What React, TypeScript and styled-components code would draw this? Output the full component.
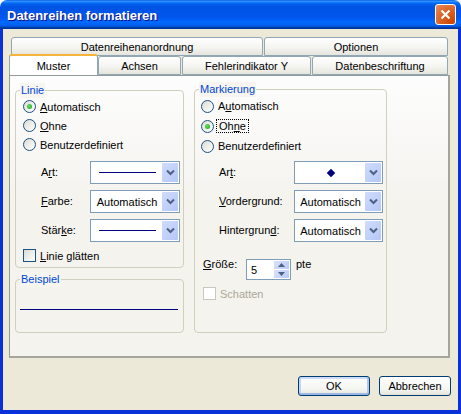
import React from "react";
import styled, { createGlobalStyle } from "styled-components";

const GlobalStyle = createGlobalStyle`
  html, body {
    margin: 0;
    padding: 0;
    background: #fff;
  }
  body {
    font-family: "Liberation Sans", "DejaVu Sans", sans-serif;
    font-size: 11px;
    color: #000;
  }
`;

const Win = styled.div`
  width: 461px;
  height: 414px;
  display: flex;
  flex-direction: column;
  overflow: hidden;
  border-radius: 7px 7px 0 0;
`;

const TitleBar = styled.div`
  height: 29px;
  flex: none;
  display: flex;
  align-items: center;
  justify-content: space-between;
  padding: 0 5px 0 7px;
  background: linear-gradient(
    180deg,
    #0058ee 0%,
    #3593ff 4%,
    #288eff 6%,
    #127dff 8%,
    #036ffc 10%,
    #0262ee 14%,
    #0057e5 20%,
    #0054e3 24%,
    #0055eb 56%,
    #005bf5 66%,
    #026afe 76%,
    #0062ef 86%,
    #0052d6 92%,
    #0040ab 94%,
    #003092 100%
  );
`;

const TitleText = styled.div`
  font-family: "Liberation Sans", sans-serif;
  font-weight: bold;
  font-size: 13px;
  padding-top: 2px;
  color: #fff;
  text-shadow: 1px 1px 0 #0f1089;
`;

const CloseButton = styled.div`
  width: 19px;
  height: 19px;
  border: 1px solid #fff;
  border-radius: 3px;
  display: flex;
  align-items: center;
  justify-content: center;
  background: radial-gradient(circle at 85% 90%, #cc4600 0%, #dc6527 55%, #e78c5f 100%);
`;

const Client = styled.div`
  flex: 1;
  min-height: 0;
  background: #ece9d8;
  border-left: 3px solid #0831d9;
  border-right: 3px solid #0831d9;
  border-bottom: 4px solid #0831d9;
  padding: 8px 7px 0 6px;
`;

const TabRowTop = styled.div`
  display: flex;
  gap: 1px;
  height: 19px;
  margin-left: 2px;
`;

const TabRowBottom = styled.div`
  display: flex;
  align-items: flex-end;
  height: 21px;
  margin-top: -2px;
  position: relative;
`;

const Tab = styled.div<{ $w: number; $gap?: number; $active?: boolean }>`
  width: ${(p) => p.$w}px;
  height: ${(p) => (p.$active ? 21 : 19)}px;
  margin-right: ${(p) => p.$gap ?? 0}px;
  box-sizing: border-box;
  display: flex;
  align-items: center;
  justify-content: center;
  padding-top: ${(p) => (p.$active ? 0 : 1)}px;
  border: 1px solid #91a7b4;
  border-bottom: ${(p) => (p.$active ? "none" : "1px solid #91a7b4")};
  border-top: ${(p) => (p.$active ? "2px solid #f5b53c" : "1px solid #91a7b4")};
  border-radius: 3px 3px 0 0;
  background: ${(p) => (p.$active ? "#fff" : "linear-gradient(180deg, #fff 0%, #f3f3ef 60%, #e6e5dc 100%)")};
  position: relative;
  z-index: ${(p) => (p.$active ? 2 : 1)};
`;

const Panel = styled.div`
  width: 441px;
  height: 283px;
  box-sizing: border-box;
  display: flex;
  align-items: flex-start;
  gap: 10px;
  padding: 14px 5px 0 5px;
  border: 1px solid #919b9c;
  border-right: 2px solid #a5a59c;
  border-bottom: 2px solid #a5a59c;
  background: linear-gradient(180deg, #fdfdfd 0%, #f4f3ee 45%, #f4f3ee 100%);
`;

const Column = styled.div`
  display: flex;
  flex-direction: column;
  gap: 11px;
`;

const Group = styled.div<{ $w: number; $h: number; $up?: boolean }>`
  position: relative;
  width: ${(p) => p.$w}px;
  height: ${(p) => p.$h}px;
  box-sizing: border-box;
  margin-top: ${(p) => (p.$up ? -1 : 0)}px;
  padding: 6px 3px 0 ${(p) => (p.$up ? 6 : 7)}px;
  border: 1px solid #d0d0bf;
  border-radius: 4px;
`;

const Legend = styled.div`
  position: absolute;
  top: -8px;
  left: 4px;
  padding: 0 1px;
  background: #f6f5f0;
  color: #0046d5;
  line-height: 15px;
`;

const OptionRow = styled.div<{ $h?: number }>`
  height: ${(p) => p.$h ?? 19}px;
  display: flex;
  align-items: center;
  gap: 4px;
`;

const SmoothRow = styled(OptionRow)`
  margin-top: 4px;
`;

const Radio = styled.span<{ $on?: boolean }>`
  width: 13px;
  height: 13px;
  box-sizing: border-box;
  flex: none;
  border: 1px solid #1c5180;
  border-radius: 50%;
  background: linear-gradient(135deg, #dcdcd5 0%, #fff 100%);
  display: flex;
  align-items: center;
  justify-content: center;
  &::after {
    content: "";
    display: ${(p) => (p.$on ? "block" : "none")};
    width: 5px;
    height: 5px;
    border-radius: 50%;
    background: radial-gradient(circle at 40% 40%, #5fe05f, #1fa01f);
  }
`;

const CheckBox = styled.span<{ $off?: boolean }>`
  width: 13px;
  height: 13px;
  box-sizing: border-box;
  flex: none;
  border: 1px solid ${(p) => (p.$off ? "#cac8bb" : "#1c5180")};
  background: ${(p) => (p.$off ? "#fff" : "linear-gradient(135deg, #dcdcd5 0%, #fff 100%)")};
`;

const Focused = styled.span`
  outline: 1px dotted #000;
  padding: 0 2px;
  margin-left: -1px;
`;

const Key = styled.span`
  text-decoration: underline;
`;

const SelectStack = styled.div<{ $top: number }>`
  display: flex;
  flex-direction: column;
  gap: 6px;
  margin-top: ${(p) => p.$top}px;
`;

const FieldRow = styled.div`
  display: flex;
  align-items: center;
  justify-content: space-between;
  padding-left: 2px;
  height: 23px;
`;

const FieldLabel = styled.div`
  padding-left: 16px;
  margin-top: -2px;
`;

const Select = styled.div<{ $w: number }>`
  width: ${(p) => p.$w}px;
  height: 23px;
  box-sizing: border-box;
  display: flex;
  align-items: center;
  justify-content: space-between;
  padding: 1px;
  border: 1px solid #7f9db9;
  background: #fff;
`;

const SelectValue = styled.div`
  flex: 1;
  display: flex;
  align-items: center;
  justify-content: center;
  height: 100%;
`;

const LineSample = styled.div`
  width: 57px;
  height: 1px;
  background: #000080;
`;

const Diamond = styled.div`
  width: 6px;
  height: 6px;
  background: #000080;
  transform: rotate(45deg);
`;

const ArrowButton = styled.div`
  width: 16px;
  height: 19px;
  flex: none;
  display: flex;
  align-items: center;
  justify-content: center;
  border-radius: 1px;
  background: linear-gradient(135deg, #d0dcfc 0%, #b4c7f7 100%);
`;

const SizeRow = styled.div`
  display: flex;
  align-items: flex-start;
  margin-top: 17px;
  margin-left: 2px;
`;

const SizeLabel = styled.div`
  width: 43px;
  line-height: 11px;
`;

const Spinner = styled.div`
  width: 45px;
  height: 21px;
  box-sizing: border-box;
  display: flex;
  justify-content: space-between;
  padding: 1px;
  border: 1px solid #7f9db9;
  background: #fff;
`;

const SpinnerValue = styled.div`
  padding: 3px 0 0 3px;
`;

const SpinnerButtons = styled.div`
  width: 15px;
  display: flex;
  flex-direction: column;
  gap: 1px;
`;

const SpinnerButton = styled.div`
  flex: 1;
  display: flex;
  align-items: center;
  justify-content: center;
  background: linear-gradient(135deg, #d8e2fc 0%, #b8caf7 100%);
`;

const Unit = styled.div`
  margin-left: 5px;
  line-height: 11px;
`;

const DisabledRow = styled.div`
  display: flex;
  align-items: center;
  gap: 4px;
  margin: 7px 0 0 2px;
  height: 13px;
  color: #aca899;
`;

const SampleBody = styled.div`
  height: 100%;
  display: flex;
  align-items: center;
  margin: 0 2px 0 -3px;
`;

const SampleLine = styled.div`
  width: 158px;
  height: 1px;
  background: #000080;
`;

const Footer = styled.div`
  display: flex;
  justify-content: flex-end;
  gap: 9px;
  margin-top: 18px;
`;

const Button = styled.div<{ $default?: boolean }>`
  width: 72px;
  height: 20px;
  box-sizing: border-box;
  display: flex;
  align-items: center;
  justify-content: center;
  border: 1px solid #003c74;
  border-radius: 3px;
  background: linear-gradient(180deg, #fff 0%, #f4f4f0 70%, #e3e3da 100%);
  box-shadow: ${(p) => (p.$default ? "inset 0 -2px 0 #9db7e5, inset 2px 0 0 #c4d4f3, inset -2px 0 0 #b4c8ee, inset 0 2px 0 #cfdcf5" : "none")};
`;

const Chevron = () => (
  <svg width="9" height="7" viewBox="0 0 9 7">
    <path d="M1 1.5 L4.5 5 L8 1.5" fill="none" stroke="#4d6185" strokeWidth="2" />
  </svg>
);

const SpinArrow = ({ up }: { up?: boolean }) => (
  <svg width="7" height="4" viewBox="0 0 7 4">
    <path d={up ? "M0 4 L3.5 0 L7 4 Z" : "M0 0 L7 0 L3.5 4 Z"} fill="#4d6185" />
  </svg>
);

const Field = ({ label, w, children }: { label: React.ReactNode; w: number; children: React.ReactNode }) => (
  <FieldRow>
    <FieldLabel>{label}</FieldLabel>
    <Select $w={w}>
      <SelectValue>{children}</SelectValue>
      <ArrowButton>
        <Chevron />
      </ArrowButton>
    </Select>
  </FieldRow>
);

const App = () => {
  return (
    <>
      <GlobalStyle />
      <Win>
        <TitleBar>
          <TitleText>Datenreihen formatieren</TitleText>
          <CloseButton>
            <svg width="11" height="11" viewBox="0 0 11 11">
              <path d="M1.5 1.5 L9.5 9.5 M9.5 1.5 L1.5 9.5" stroke="#fff" strokeWidth="2.2" />
            </svg>
          </CloseButton>
        </TitleBar>
        <Client>
          <TabRowTop>
            <Tab $w={252}>Datenreihenanordnung</Tab>
            <Tab $w={184}>Optionen</Tab>
          </TabRowTop>
          <TabRowBottom>
            <Tab $w={89} $active>Muster</Tab>
            <Tab $w={83} $gap={1}>Achsen</Tab>
            <Tab $w={129} $gap={1}>Fehlerindikator Y</Tab>
            <Tab $w={136}>Datenbeschriftung</Tab>
          </TabRowBottom>
          <Panel>
            <Column>
              <Group $w={169} $h={178}>
                <Legend>Linie</Legend>
                <OptionRow><Radio $on /><span><Key>A</Key>utomatisch</span></OptionRow>
                <OptionRow><Radio /><span><Key>O</Key>hne</span></OptionRow>
                <OptionRow><Radio /><span>Benutzerdefiniert</span></OptionRow>
                <SelectStack $top={7}>
                  <Field w={90} label={<>A<Key>r</Key>t:</>}><LineSample /></Field>
                  <Field w={90} label={<><Key>F</Key>arbe:</>}>Automatisch</Field>
                  <Field w={90} label={<>Stär<Key>k</Key>e:</>}><LineSample /></Field>
                </SelectStack>
                <SmoothRow>
                  <CheckBox />
                  <span><Key>L</Key>inie glätten</span>
                </SmoothRow>
              </Group>
              <Group $w={169} $h={54}>
                <Legend>Beispiel</Legend>
                <SampleBody>
                  <SampleLine />
                </SampleBody>
              </Group>
            </Column>
            <Group $w={193} $h={244} $up>
              <Legend>Markierung</Legend>
              <OptionRow $h={20}><Radio /><span>A<Key>u</Key>tomatisch</span></OptionRow>
              <OptionRow $h={20}><Radio $on /><Focused>Oh<Key>n</Key>e</Focused></OptionRow>
              <OptionRow $h={20}><Radio /><span>Benutzerdefiniert</span></OptionRow>
              <SelectStack $top={5}>
                <Field w={89} label={<>Ar<Key>t</Key>:</>}><Diamond /></Field>
                <Field w={89} label={<><Key>V</Key>ordergrund:</>}>Automatisch</Field>
                <Field w={89} label={<>Hintergrun<Key>d</Key>:</>}>Automatisch</Field>
              </SelectStack>
              <SizeRow>
                <SizeLabel><Key>G</Key>röße:</SizeLabel>
                <Spinner>
                  <SpinnerValue>5</SpinnerValue>
                  <SpinnerButtons>
                    <SpinnerButton><SpinArrow up /></SpinnerButton>
                    <SpinnerButton><SpinArrow /></SpinnerButton>
                  </SpinnerButtons>
                </Spinner>
                <Unit>pte</Unit>
              </SizeRow>
              <DisabledRow>
                <CheckBox $off />
                <span>Schatten</span>
              </DisabledRow>
            </Group>
          </Panel>
          <Footer>
            <Button $default>OK</Button>
            <Button>Abbrechen</Button>
          </Footer>
        </Client>
      </Win>
    </>
  );
};

export default App;
